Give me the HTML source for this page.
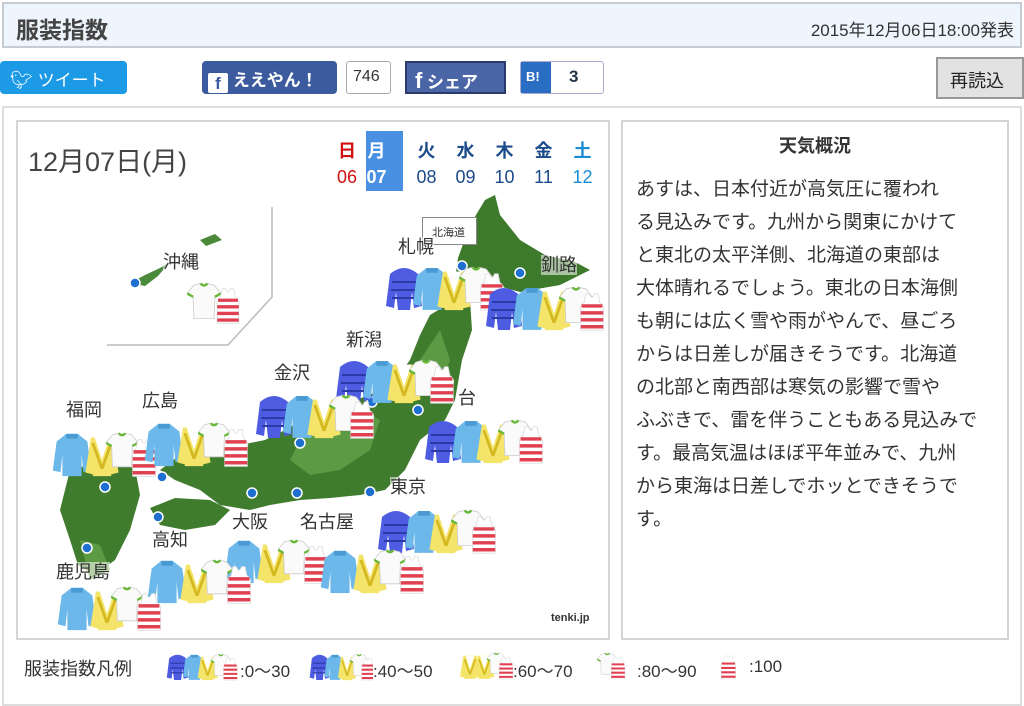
<!DOCTYPE html>
<html><head><meta charset="utf-8">
<style>
*{margin:0;padding:0;box-sizing:border-box}
body{width:1024px;height:698px;overflow:hidden;background:#fff;font-family:"Liberation Sans","Noto Sans CJK JP",sans-serif;color:#333;position:relative}
.a{position:absolute}
#hd{left:2px;top:2px;width:1020px;height:46px;background:#eef5fc;border:2px solid #c4ccd4}
#hd .t{left:12px;top:7px;font-size:23px;font-weight:bold;color:#444}
#hd .d{right:6px;top:12px;font-size:17px;color:#333}
.btn{color:#fff;font-size:17px;border-radius:4px}
.lbl{font-size:18px;color:#333;position:absolute;white-space:nowrap;background:rgba(255,255,255,.55);line-height:20px}
#txt{left:621px;top:120px;width:388px;height:520px;border:2px solid #d4d4d4}
#txt h3{text-align:center;font-size:18px;margin-top:10px;color:#333}
#txt p{font-size:19px;line-height:33px;margin:15px 0 0 13px;color:#333;white-space:nowrap}
.lg{position:absolute;top:657px;font-size:17px}
</style></head><body>
<svg width="0" height="0" style="position:absolute">
<defs>
<symbol id="jk" viewBox="0 0 40 50"><path d="M6 12 Q20 0 34 12 L38 44 L30 46 L28 30 L26 48 L14 48 L12 30 L10 46 L2 44 Z" fill="#4d5ce0"/><path d="M8 20 H32 M7 28 H33 M8 36 H32" stroke="#2c3aa8" stroke-width="2"/></symbol>
<symbol id="sw" viewBox="0 0 40 50"><path d="M14 4 H26 L36 12 L40 42 L32 44 L30 26 L30 48 L10 48 L10 26 L8 44 L0 42 L4 12 Z" fill="#6cb8ea"/><path d="M14 4 H26 V9 H14Z" fill="#4a9ad4"/></symbol>
<symbol id="cd" viewBox="0 0 40 50"><path d="M8 6 L32 6 L38 44 L30 46 L30 48 L10 48 L10 46 L2 44 Z" fill="#f4e46a"/><path d="M12 6 L20 30 L28 6" fill="#fff"/><path d="M10 12 L20 40 M30 12 L20 40" stroke="#d4b820" stroke-width="3"/></symbol>
<symbol id="ts" viewBox="0 0 40 50"><path d="M8 6 L16 4 Q20 9 24 4 L32 6 L40 16 L33 20 L32 46 L8 46 L7 20 L0 16 Z" fill="#fafafa" stroke="#ccc"/><path d="M16 4 Q20 9 24 4" stroke="#6ab83a" stroke-width="3" fill="none"/><path d="M0 16 L7 20 M40 16 L33 20" stroke="#6ab83a" stroke-width="3"/></symbol>
<symbol id="tk" viewBox="0 0 30 46"><path d="M8 2 H12 Q15 10 18 2 H22 L24 12 Q30 16 28 22 L28 44 L2 44 L2 22 Q0 16 6 12 Z" fill="#fff" stroke="#ddd"/><path d="M3 16 H27 M2 24 H28 M2 32 H28 M2 40 H28" stroke="#e04050" stroke-width="4"/></symbol>
<g id="full"><use href="#jk" x="0" y="0" width="42" height="50"/><use href="#sw" x="30" y="2" width="38" height="48"/><use href="#cd" x="52" y="4" width="38" height="46"/><use href="#ts" x="76" y="2" width="34" height="42"/><use href="#tk" x="96" y="10" width="26" height="40"/></g>
<g id="half"><use href="#sw" x="0" y="2" width="44" height="48"/><use href="#cd" x="32" y="4" width="40" height="46"/><use href="#ts" x="56" y="2" width="32" height="40"/><use href="#tk" x="80" y="10" width="28" height="40"/></g>
</defs></svg>

<div id="hd" class="a"><div class="a t">服装指数</div><div class="a d">2015年12月06日18:00発表</div></div>

<div class="a btn" style="left:0;top:61px;width:127px;height:33px;background:#1d9ae6;padding:5px 0 0 10px"><span style="font-size:18px">🐦︎</span> ツイート</div>
<div class="a btn" style="left:202px;top:61px;width:135px;height:33px;background:#3c5a9e;padding:5px 0 0 6px;font-weight:bold"><span style="display:inline-block;width:20px;height:20px;background:#fff;color:#3c5a9e;text-align:center;border-radius:2px;font-size:17px;line-height:22px;vertical-align:-3px">f</span> ええやん！</div>
<div class="a" style="left:346px;top:61px;width:45px;height:33px;border:1px solid #aaa;border-radius:3px;font-size:16px;padding:6px 0 0 6px;color:#333">746</div>
<div class="a btn" style="left:405px;top:61px;width:101px;height:33px;background:#4a66a6;border:2px solid #2a3a6a;border-radius:0;padding:5px 0 0 8px;font-weight:bold"><span style="font-size:22px">f</span> シェア</div>
<div class="a" style="left:520px;top:61px;width:84px;height:33px;border:1px solid #aac;border-radius:3px"><div class="a" style="left:0;top:0;width:30px;height:31px;background:#2a6ec4;color:#fff;font-weight:bold;font-size:13px;padding:7px 0 0 5px">B!</div><div class="a" style="left:48px;top:5px;font-size:17px;color:#234;font-weight:bold">3</div></div>
<div class="a" style="left:936px;top:57px;width:88px;height:42px;background:#e2e2e2;border:2px solid #999;font-size:18px;padding:8px 0 0 12px;color:#222">再読込</div>

<div class="a" style="left:2px;top:106px;width:1020px;height:600px;border:2px solid #ddd"></div>
<div class="a" style="left:16px;top:120px;width:594px;height:520px;border:2px solid #d4d4d4"></div>

<svg class="a" style="left:18px;top:122px" width="590" height="516">
<g transform="translate(-18,-122)">
<path d="M272 207 V297 L228 345 H107" stroke="#bbb" fill="none" stroke-width="1.5"/>
<path d="M130 283 L145 275 L160 268 L170 262 L158 276 L145 286 Z M200 240 L215 234 L222 240 L206 246Z" fill="#4a8a3a"/>
<path d="M458 258 L470 225 L485 200 L495 195 L500 215 L520 240 L545 255 L575 262 L590 270 L560 285 L520 292 L495 285 L470 290 L455 280Z" fill="#3e7a2c"/>
<path d="M455 300 L470 300 L472 330 L462 360 L455 400 L445 420 L420 440 L405 470 L385 490 L360 495 L330 498 L300 500 L270 505 L250 510 L220 505 L200 490 L175 480 L160 470 L180 455 L210 450 L240 445 L265 440 L285 430 L310 415 L340 405 L370 395 L395 380 L410 360 L420 335 L430 315 Z" fill="#3f7c2e"/>
<path d="M300 440 L330 420 L360 410 L380 420 L370 450 L340 470 L310 475 L290 460Z" fill="#5d9a44"/>
<path d="M150 508 L175 498 L210 500 L230 510 L215 525 L185 530 L160 525Z" fill="#3f7c2e"/>
<path d="M70 470 L100 462 L135 468 L140 495 L130 530 L115 560 L95 575 L78 565 L70 540 L60 510 Z" fill="#3f7c2e"/>
<path d="M80 540 L100 545 L110 570 L90 580Z" fill="#5d9a44"/>
<path d="M420 360 L440 330 L450 360 L440 390Z" fill="#5d9a44"/>
<g fill="#1f6fd0" stroke="#fff" stroke-width="1.5">
<circle cx="135" cy="283" r="5"/><circle cx="462" cy="266" r="5"/><circle cx="520" cy="273" r="5"/><circle cx="418" cy="410" r="5"/><circle cx="300" cy="443" r="5"/><circle cx="372" cy="402" r="5"/><circle cx="105" cy="487" r="5"/><circle cx="162" cy="477" r="5"/><circle cx="252" cy="493" r="5"/><circle cx="297" cy="493" r="5"/><circle cx="370" cy="492" r="5"/><circle cx="158" cy="517" r="5"/><circle cx="87" cy="548" r="5"/>
</g>
<use href="#ts" x="187" y="280" width="34" height="42"/><use href="#tk" x="215" y="287" width="26" height="38"/>
<use href="#full" x="383" y="262"/>
<use href="#full" x="483" y="282"/>
<use href="#full" x="333" y="355"/>
<use href="#full" x="422" y="415"/>
<use href="#full" x="253" y="390"/>
<use href="#full" x="375" y="505"/>
<use href="#half" x="50" y="428"/>
<use href="#half" x="142" y="418"/>
<use href="#half" x="222" y="535"/>
<use href="#half" x="318" y="545"/>
<use href="#half" x="145" y="555"/>
<use href="#half" x="55" y="582"/>
<text x="551" y="621" font-size="11" font-weight="bold" fill="#333" font-family="Liberation Sans">tenki.jp</text>
</g></svg>

<div class="a" style="left:28px;top:140px;font-size:27px;color:#444">12月07日(月)</div>
<div class="a" style="left:366px;top:131px;width:37px;height:60px;background:#4a90e2"></div>
<div class="a" style="left:337px;top:138px;font-size:18px;font-weight:bold;line-height:26px;text-align:center">
<span style="display:inline-block;width:20px;color:#d01010">日<br><span style="font-weight:normal">06</span></span><span style="display:inline-block;width:39px;margin-left:19px;color:#fff;position:relative;left:-19px">月<br>07</span>
</div>
<div class="a" style="left:407px;top:138px;font-size:18px;line-height:26px;color:#1a4a8a;white-space:nowrap">
<span style="display:inline-block;width:39px;text-align:center"><b>火</b><br>08</span><span style="display:inline-block;width:39px;text-align:center"><b>水</b><br>09</span><span style="display:inline-block;width:39px;text-align:center"><b>木</b><br>10</span><span style="display:inline-block;width:39px;text-align:center"><b>金</b><br>11</span><span style="display:inline-block;width:39px;text-align:center;color:#1a8ad4"><b>土</b><br>12</span>
</div>
<div class="a" style="left:422px;top:217px;width:55px;height:28px;border:1px solid #888;background:#fff;font-size:11px;padding:6px 0 0 9px">北海道</div>

<div class="lbl" style="left:163px;top:252px">沖縄</div>
<div class="lbl" style="left:398px;top:237px">札幌</div>
<div class="lbl" style="left:541px;top:255px">釧路</div>
<div class="lbl" style="left:346px;top:330px">新潟</div>
<div class="lbl" style="left:458px;top:388px">台</div>
<div class="lbl" style="left:274px;top:363px">金沢</div>
<div class="lbl" style="left:66px;top:400px">福岡</div>
<div class="lbl" style="left:142px;top:391px">広島</div>
<div class="lbl" style="left:390px;top:477px">東京</div>
<div class="lbl" style="left:232px;top:512px">大阪</div>
<div class="lbl" style="left:300px;top:512px">名古屋</div>
<div class="lbl" style="left:152px;top:530px">高知</div>
<div class="lbl" style="left:56px;top:562px">鹿児島</div>

<div id="txt" class="a"><h3>天気概況</h3>
<p>あすは、日本付近が高気圧に覆われ<br>る見込みです。九州から関東にかけて<br>と東北の太平洋側、北海道の東部は<br>大体晴れるでしょう。東北の日本海側<br>も朝には広く雪や雨がやんで、昼ごろ<br>からは日差しが届きそうです。北海道<br>の北部と南西部は寒気の影響で雪や<br>ふぶきで、雷を伴うこともある見込みで<br>す。最高気温はほぼ平年並みで、九州<br>から東海は日差しでホッとできそうで<br>す。</p></div>

<div class="a" style="left:24px;top:655px;font-size:18px;color:#333;white-space:nowrap">服装指数凡例</div>
<svg class="a" style="left:165px;top:650px" width="75" height="32"><g transform="scale(0.6)"><use href="#full" x="0" y="2"/></g></svg>
<svg class="a" style="left:308px;top:650px" width="65" height="32"><g transform="scale(0.55,0.6)"><use href="#full" x="0" y="2"/></g></svg>
<svg class="a" style="left:458px;top:650px" width="56" height="32"><g transform="scale(0.6)"><use href="#cd" x="0" y="4" width="40" height="46"/><use href="#cd" x="24" y="4" width="40" height="46"/><use href="#ts" x="48" y="2" width="32" height="40"/><use href="#tk" x="66" y="10" width="28" height="40"/></g></svg>
<svg class="a" style="left:597px;top:650px" width="40" height="32"><g transform="scale(0.6)"><use href="#ts" x="0" y="2" width="34" height="42"/><use href="#tk" x="22" y="10" width="26" height="40"/></g></svg>
<svg class="a" style="left:720px;top:650px" width="28" height="32"><g transform="scale(0.6)"><use href="#tk" x="0" y="8" width="28" height="42"/></g></svg>
<div class="lg" style="left:240px">:0〜30</div>
<div class="lg" style="left:373px">:40〜50</div>
<div class="lg" style="left:513px">:60〜70</div>
<div class="lg" style="left:637px">:80〜90</div>
<div class="lg" style="left:749px">:100</div>
</body></html>
